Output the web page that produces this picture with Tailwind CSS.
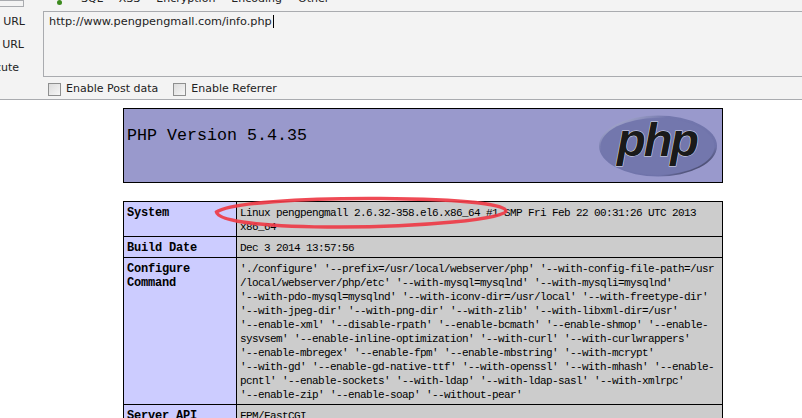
<!DOCTYPE html>
<html lang="en">
<head>
    <meta charset="UTF-8">
    <title>phpinfo</title>
    <script src="https://cdn.jsdelivr.net/npm/@tailwindcss/browser@4"></script>
</head>
<body class="bg-white">
    <div class="relative w-[802px] h-[418px] overflow-hidden font-['DejaVu_Sans',sans-serif]">

        <!-- HackBar toolbar -->
        <div class="h-[100px] bg-[#f3f3f3] border-b border-[#a9abaf] text-[11px] text-[#222]">
            <div class="flex items-center h-[11px] overflow-hidden">
                <div class="w-[25px] h-[7px] -mt-[4px] -ml-px border border-[#a9abaf] bg-[#f3f3f3]"></div>
                <span class="ml-[33px] w-[5px] h-[5px] -mt-[7px] rounded-full bg-[#3c8a1e]"></span>
                <div class="flex ml-[19px] -mt-[13px] gap-[16px] leading-[14px]">
                    <span>SQL</span><span>XSS</span><span>Encryption</span><span>Encoding</span><span>Other</span>
                </div>
            </div>
            <div class="flex h-[66px]">
                <div class="w-[43px] shrink-0 overflow-hidden flex flex-col items-end pt-[4px] pr-[18px] gap-[9px] leading-[14px]">
                    <span class="whitespace-nowrap">Load URL</span>
                    <span class="whitespace-nowrap pr-px">Split URL</span>
                    <span class="whitespace-nowrap pr-[6px]">Execute</span>
                </div>
                <div class="flex-1 -mr-[4px] border border-[#a9abaf] pl-[5px] pt-[3px] leading-[14px] text-[11.25px]">
                    <span class="border-r border-black pr-px">http://www.pengpengmall.com/info.php</span>
                </div>
            </div>
            <div class="flex items-center h-[22px] pt-[3px] pl-[48px]">
                <span class="w-[13px] h-[13px] border border-[#8e8f8f] bg-gradient-to-br from-[#dcdcdc] to-[#f6f6f6]"></span>
                <span class="ml-[5px]">Enable Post data</span>
                <span class="ml-[15px] w-[13px] h-[13px] border border-[#8e8f8f] bg-gradient-to-br from-[#dcdcdc] to-[#f6f6f6]"></span>
                <span class="ml-[5px]">Enable Referrer</span>
            </div>
        </div>

        <!-- phpinfo header -->
        <div class="flex items-center justify-between w-[600px] h-[75px] ml-[123px] mt-[8px] border border-black bg-[#9999cc] font-['Liberation_Mono',monospace] text-black">
            <h1 class="pl-[3px] -mt-[20px] text-[16.67px] leading-[18px]">PHP Version 5.4.35</h1>
            <svg class="mr-[4px]" width="120" height="62" viewBox="0 0 120 62">
                <defs>
                    <linearGradient id="shine" x1="0" y1="0" x2="1" y2="1">
                        <stop offset="0" stop-color="#c5c8e0"/>
                        <stop offset="0.3" stop-color="#7377ad"/>
                        <stop offset="0.75" stop-color="#6f73aa"/>
                        <stop offset="1" stop-color="#1c1c26"/>
                    </linearGradient>
                </defs>
                <ellipse cx="60" cy="31" rx="59" ry="30.5" fill="url(#shine)"/>
                <ellipse cx="59.5" cy="31.5" rx="57" ry="28.5" fill="#7377ad"/>
                <text x="59" y="41" text-anchor="middle" font-family="Liberation Sans" font-weight="700" font-style="italic" font-size="47" letter-spacing="-2" fill="#1a1a1a" stroke="#dfe0ee" stroke-width="1" paint-order="stroke">php</text>
            </svg>
        </div>

        <!-- info table -->
        <table class="table-fixed w-[600px] ml-[123px] mt-[18px] border-collapse border border-black font-['Liberation_Mono',monospace] text-black">
            <tbody>
                <tr>
                    <td class="w-[113px] align-top border border-black bg-[#ccccff] pl-[3px] pt-[4px] pb-[2px] text-[12px] tracking-[-0.2px] leading-[14px] font-bold">System</td>
                    <td class="align-top border border-black bg-[#cccccc] pl-[3px] pt-[4px] pb-[2px] text-[11px] tracking-[-0.6px] leading-[14px] whitespace-nowrap">Linux pengpengmall 2.6.32-358.el6.x86_64 #1 SMP Fri Feb 22 00:31:26 UTC 2013<br>x86_64</td>
                </tr>
                <tr>
                    <td class="align-top border border-black bg-[#ccccff] pl-[3px] pt-[4px] pb-[2px] text-[12px] tracking-[-0.2px] leading-[14px] font-bold">Build Date</td>
                    <td class="align-top border border-black bg-[#cccccc] pl-[3px] pt-[4px] pb-[2px] text-[11px] tracking-[-0.6px] leading-[14px] whitespace-nowrap">Dec 3 2014 13:57:56</td>
                </tr>
                <tr>
                    <td class="align-top border border-black bg-[#ccccff] pl-[3px] pt-[4px] pb-[2px] text-[12px] tracking-[-0.2px] leading-[14px] font-bold">Configure<br>Command</td>
                    <td class="align-top border border-black bg-[#cccccc] pl-[3px] pt-[4px] pb-[2px] text-[11px] tracking-[-0.6px] leading-[14px] whitespace-nowrap">'./configure' '--prefix=/usr/local/webserver/php' '--with-config-file-path=/usr<br>/local/webserver/php/etc' '--with-mysql=mysqlnd' '--with-mysqli=mysqlnd'<br>'--with-pdo-mysql=mysqlnd' '--with-iconv-dir=/usr/local' '--with-freetype-dir'<br>'--with-jpeg-dir' '--with-png-dir' '--with-zlib' '--with-libxml-dir=/usr'<br>'--enable-xml' '--disable-rpath' '--enable-bcmath' '--enable-shmop' '--enable-<br>sysvsem' '--enable-inline-optimization' '--with-curl' '--with-curlwrappers'<br>'--enable-mbregex' '--enable-fpm' '--enable-mbstring' '--with-mcrypt'<br>'--with-gd' '--enable-gd-native-ttf' '--with-openssl' '--with-mhash' '--enable-<br>pcntl' '--enable-sockets' '--with-ldap' '--with-ldap-sasl' '--with-xmlrpc'<br>'--enable-zip' '--enable-soap' '--without-pear'</td>
                </tr>
                <tr>
                    <td class="align-top border border-black bg-[#ccccff] pl-[3px] pt-[4px] pb-[2px] text-[12px] tracking-[-0.2px] leading-[14px] font-bold">Server API</td>
                    <td class="align-top border border-black bg-[#cccccc] pl-[3px] pt-[4px] pb-[2px] text-[11px] tracking-[-0.6px] leading-[14px] whitespace-nowrap">FPM/FastCGI</td>
                </tr>
            </tbody>
        </table>

        <!-- red annotation ring -->
        <svg class="absolute left-[210px] top-[195px] pointer-events-none" width="305" height="40" viewBox="0 0 305 40">
            <path d="M6.5 17 C20 8 90 3 170 3.5 C240 4 296 8 296 16 C296 24 210 32 130 32 C60 32 8 27 6.5 17 Z" fill="none" stroke="#ee3b46" stroke-width="3.5" opacity="0.92"/>
        </svg>
    </div>
</body>
</html>
